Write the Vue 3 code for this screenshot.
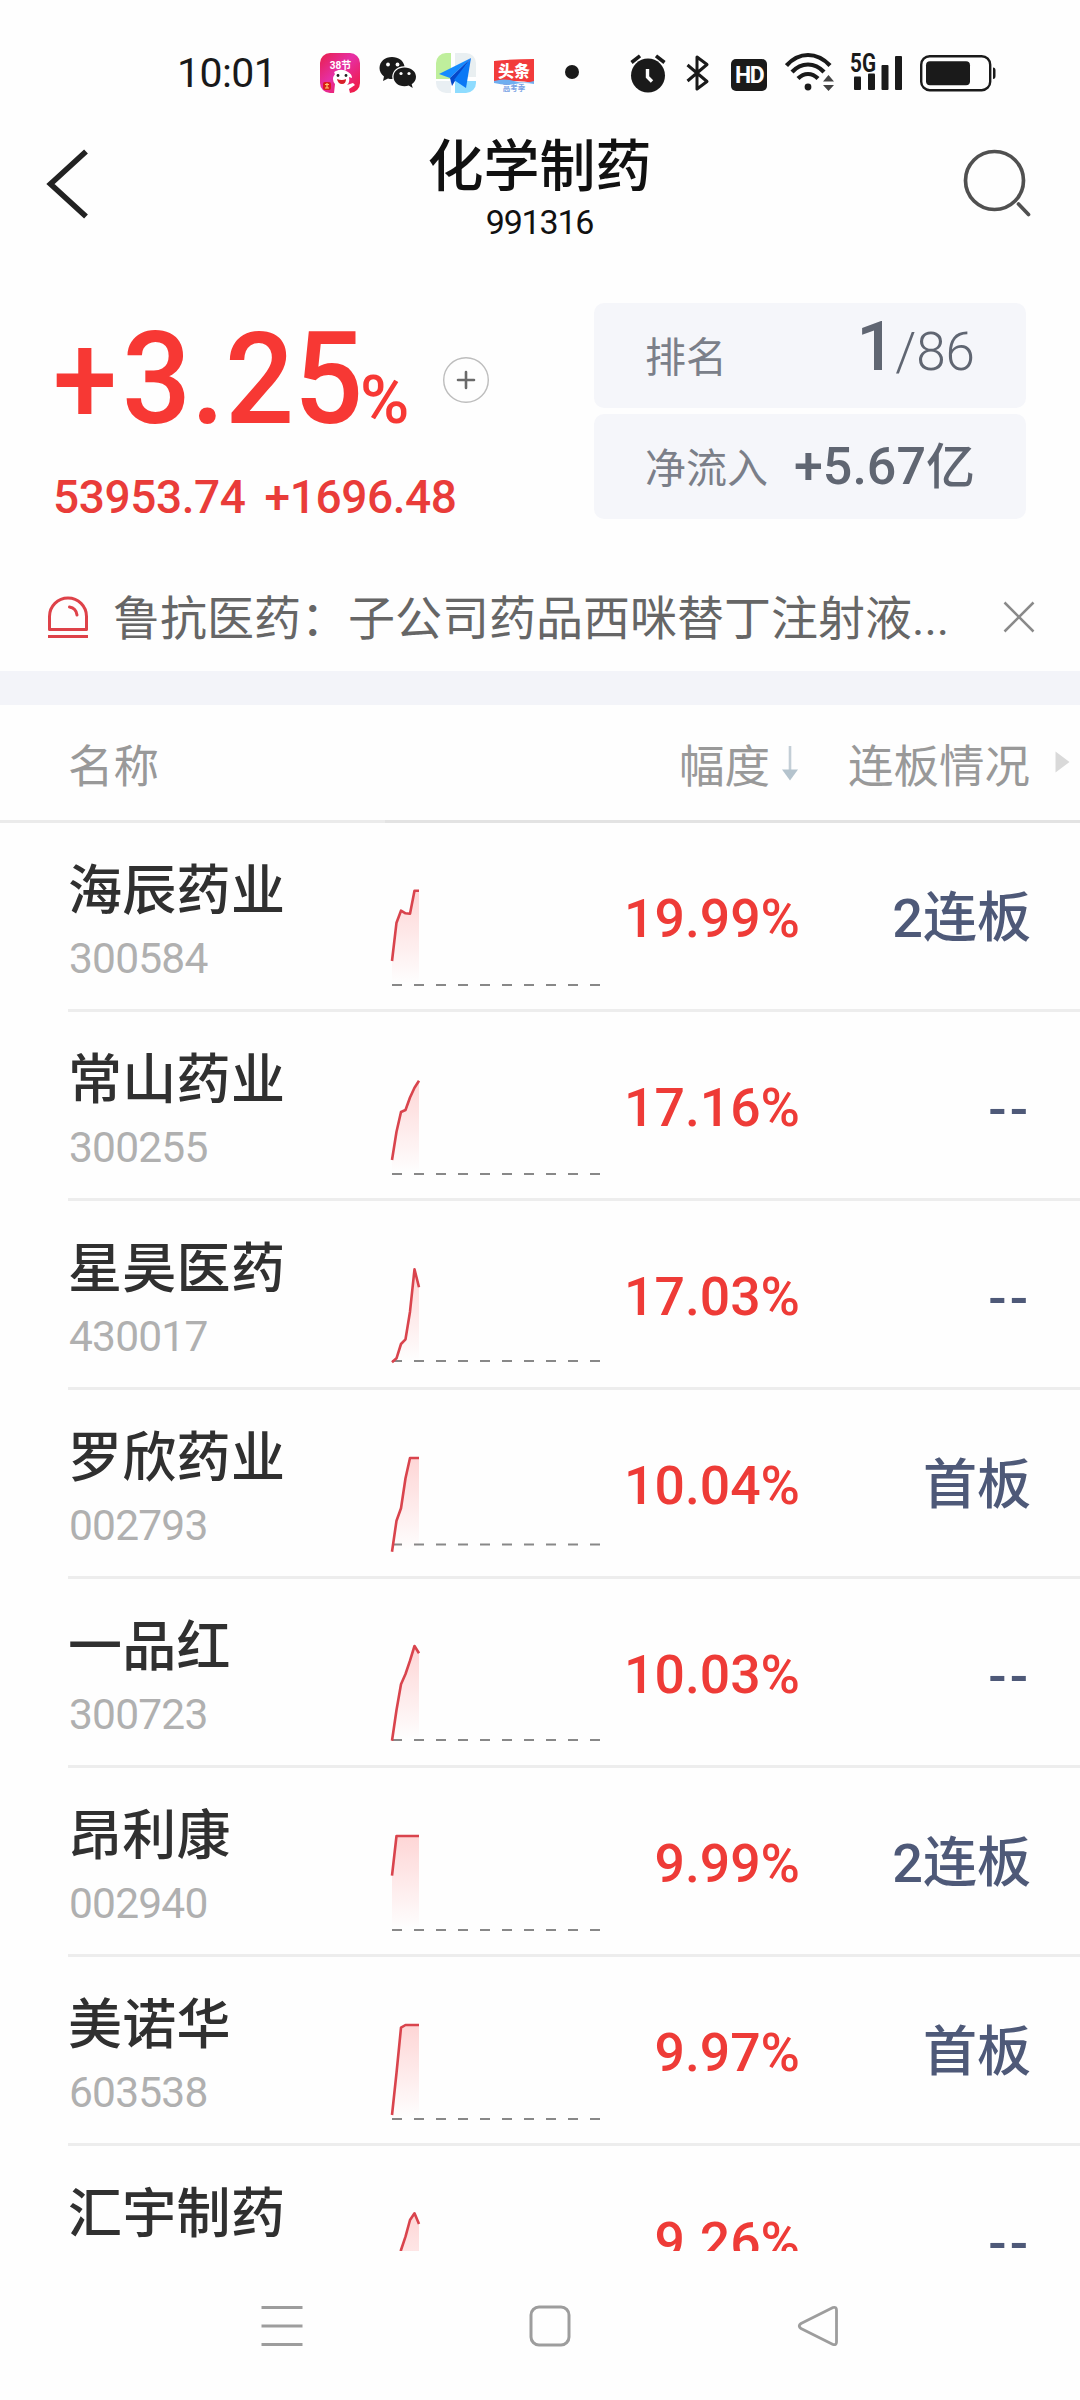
<script setup>
const STEP = 4.5

const stocks = [
  { name: '海辰药业', code: '300584', change: '19.99%', streak: '2连板', base: 162, points: [138, 99.7, 87.7, 90.3, 90.7, 67.7, 67.7] },
  { name: '常山药业', code: '300255', change: '17.16%', streak: '--', base: 162, points: [148, 119.7, 100, 98, 85.5, 75.7, 68.7] },
  { name: '星昊医药', code: '430017', change: '17.03%', streak: '--', base: 160, points: [161.3, 157.3, 143, 138.3, 110.7, 68.3, 86.3] },
  { name: '罗欣药业', code: '002793', change: '10.04%', streak: '首板', base: 154.6, points: [161.7, 130.7, 118.3, 88.3, 68, 68, 68] },
  { name: '一品红', code: '300723', change: '10.03%', streak: '--', base: 161, points: [161.7, 131, 105.3, 95, 81.7, 67, 74.3] },
  { name: '昂利康', code: '002940', change: '9.99%', streak: '2连板', base: 162, points: [107.7, 68, 68, 68, 68, 68, 68] },
  { name: '美诺华', code: '603538', change: '9.97%', streak: '首板', base: 162, points: [158, 116, 70.7, 68, 68, 68, 68] },
  { name: '汇宇制药', code: '688553', change: '9.26%', streak: '--', base: 162, points: [161, 130, 104, 90.7, 74, 67.3, 78] }
]

const line = (points) => points.map((y, i) => `${i * STEP},${y}`).join(' ')
const area = (points) => `0,162 ${line(points)} ${(points.length - 1) * STEP},162`
</script>

<template>
  <div class="screen">
    <div class="status">
      <span class="clock">10:01</span>
      <svg class="app-jd" width="40" height="40" viewBox="0 0 40 40">
        <defs>
          <linearGradient id="jd" x1="0" y1="0" x2="1" y2="1">
            <stop offset="0" stop-color="#e8204a" />
            <stop offset=".45" stop-color="#e62fa6" />
            <stop offset="1" stop-color="#f01838" />
          </linearGradient>
        </defs>
        <rect width="40" height="40" rx="10" fill="url(#jd)" />
        <text x="20.5" y="15.5" text-anchor="middle" class="jd-text">38节</text>
        <path d="M14 40l1-9q-4-5 0-10q-2-2 1-3q6-3 12 1q4 2 4 6l-3-1q1 6-2 8l6-2 2 2-6 4 1 4z" fill="#fff" />
        <circle cx="18" cy="22.5" r="1.4" fill="#222" />
        <circle cx="26" cy="22.5" r="1.4" fill="#222" />
        <path d="M17 26q5 2 9 0q0 5-4 5t-5-5z" fill="#d8202a" />
        <rect x="3" y="29" width="8" height="8" rx="2" fill="#d91c1c" />
        <path d="M5 31.5h4M7 30v5M5 35h4" stroke="#ffc76b" stroke-width="1.2" />
      </svg>
      <svg class="app-wechat" width="38" height="34" viewBox="0 0 38 34">
        <path d="M13 1C6 1 .5 5.600 .5 12c0 3.600 1.800 6.500 4.500 8.500L4 25l5-2.500c1.500.5 3 .7 4.500.6C12 16 18 10 25.500 10.300 24.500 4.500 19.500 1 13 1z" fill="#1a1a1a" />
        <path d="M25.500 11.500c-6.500 0-11 4-11 9.300s4.500 9.500 11 9.500c1.500 0 3-.3 4.200-.7l4 2.400-1-3.700c2.700-1.800 4.300-4.500 4.300-7.500 0-5.300-5-9.300-11.500-9.300z" fill="#1a1a1a" />
        <g fill="#fefefe"><circle cx="9" cy="8.500" r="1.900" /><circle cx="18.500" cy="8.500" r="1.900" /><circle cx="22" cy="17.500" r="1.600" /><circle cx="30" cy="17.500" r="1.600" /></g>
      </svg>
      <svg class="app-map" width="40" height="40" viewBox="0 0 40 40">
        <defs><clipPath id="map"><rect width="40" height="40" rx="10" /></clipPath></defs>
        <g clip-path="url(#map)">
          <rect width="40" height="40" fill="#fff" />
          <rect width="15" height="26" fill="#bfef9c" />
          <rect x="19" width="21" height="24" fill="#e9eff1" />
          <rect y="28" width="15" height="12" fill="#e9eff3" />
          <rect x="19" y="28" width="21" height="12" fill="#8edcff" />
        </g>
        <path d="M35 5L3 21l11 4z" fill="#168bff" />
        <path d="M35 5L14 25l2 8 3-5z" fill="#0648c9" />
        <path d="M35 5L18 27l12 8z" fill="#0a78f5" />
      </svg>
      <svg class="app-toutiao" width="40" height="34" viewBox="0 0 40 34">
        <path d="M0 2Q20 0 40 0V24Q20 20 0 24z" fill="#f23b3b" />
        <path d="M0 22q10-3 20 0t20 0v3q-10-2-19 0t-21-1z" fill="#6faef0" />
        <text x="20" y="18" text-anchor="middle" class="tt-text">头条</text>
        <text x="20" y="32" text-anchor="middle" class="tt-sub">高考季</text>
      </svg>
      <i class="dot"></i>
      <svg class="ic-alarm" width="36" height="39" viewBox="0 0 36 39">
        <circle cx="18" cy="21.500" r="17" fill="#1a1a1a" />
        <path d="M1.500 8.500L10 1.800M34.500 8.500L26 1.800" stroke="#1a1a1a" stroke-width="3.600" />
        <path d="M17.500 15v8l4.500 4.500" fill="none" stroke="#fefefe" stroke-width="3.400" />
      </svg>
      <svg class="ic-bt" width="24" height="38" viewBox="0 0 24 38">
        <path d="M1.500 11L21 27.500L11 35V3L21 10.500L1.500 27" fill="none" stroke="#1a1a1a" stroke-width="3" stroke-linejoin="round" />
      </svg>
      <span class="ic-hd">HD</span>
      <svg class="ic-wifi" width="50" height="39" viewBox="0 0 50 39">
        <g fill="none" stroke="#1a1a1a" stroke-width="4.200">
          <path d="M1.500 13.500Q11 3 23 3T45 13.500" />
          <path d="M7 20Q14 12.500 23 12.500T39 20" />
          <path d="M13 26.500Q17.500 22 23 22T33 26.500" />
        </g>
        <circle cx="23" cy="35" r="3.400" fill="#1a1a1a" />
        <path d="M38 29.500L43.500 23l5.500 6.500zM38 33h11l-5.500 6z" fill="#444" />
      </svg>
      <svg class="ic-signal" width="54" height="38" viewBox="0 0 54 38">
        <text x="0" y="18.500" class="g5" textLength="26" lengthAdjust="spacingAndGlyphs">5G</text>
        <g fill="#1a1a1a">
          <rect x="4" y="23.500" width="7" height="13.500" rx="1" /><rect x="18" y="20.500" width="7" height="16.500" rx="1" />
          <rect x="31.500" y="12" width="7" height="25" rx="1" /><rect x="45" y="3" width="7" height="34" rx="1" />
        </g>
      </svg>
      <svg class="ic-battery" width="77" height="37" viewBox="0 0 77 37">
        <rect x="1.200" y="1.200" width="69" height="34" rx="8.500" fill="none" stroke="#1a1a1a" stroke-width="2.400" />
        <rect x="6" y="6.300" width="44" height="24" rx="4" fill="#1a1a1a" />
        <path d="M73 12.500q2.500 0 2.500 3v5.500q0 3-2.500 3z" fill="#1a1a1a" />
      </svg>
    </div>

    <header class="head">
      <svg class="back" width="44" height="70" viewBox="0 0 44 70">
        <path d="M40 2.500L4.500 35L40 67.500" fill="none" stroke="#222" stroke-width="5.600" />
      </svg>
      <div class="titles">
        <h1>化学制药</h1>
        <span class="index-code">991316</span>
      </div>
      <svg class="search" width="70" height="70" viewBox="0 0 70 70">
        <circle cx="31.500" cy="31.500" r="29" fill="none" stroke="#505050" stroke-width="3.700" />
        <path d="M55.500 55l10 10.500" stroke="#505050" stroke-width="3.700" stroke-linecap="round" />
      </svg>
    </header>

    <section class="hero">
      <div class="quote">
        <div class="pct-row">
          <div class="pct"><span class="plus">+</span><span class="num">3.25</span><span class="unit">%</span></div>
          <svg class="add" width="46" height="46" viewBox="0 0 46 46">
            <circle cx="23" cy="23" r="22.300" fill="none" stroke="#bdbdbd" stroke-width="1.400" />
            <path d="M15 23h16M23 15v16" stroke="#6a6a6a" stroke-width="2.600" stroke-linecap="round" />
          </svg>
        </div>
        <div class="points"><span>53953.74</span><span>+1696.48</span></div>
      </div>
      <div class="stats">
        <div class="stat">
          <span class="label">排名</span>
          <span class="value"><b class="rank">1</b><span class="total">/86</span></span>
        </div>
        <div class="stat">
          <span class="label">净流入</span>
          <span class="value flow">+5.67<span class="yi">亿</span></span>
        </div>
      </div>
    </section>

    <div class="news">
      <svg class="siren" width="42" height="44" viewBox="0 0 42 44">
        <path d="M2.500 33.500V20.500a18.500 18.500 0 0 1 37 0V33.500z" fill="none" stroke="#de4249" stroke-width="3" stroke-linejoin="round" />
        <path d="M22.500 11q6.500 1 7.500 8" fill="none" stroke="#de4249" stroke-width="3" stroke-linecap="round" />
        <path d="M1 40.500h40" stroke="#de4249" stroke-width="3" />
      </svg>
      <span class="headline">鲁抗医药：子公司药品西咪替丁注射液<span class="dots">...</span></span>
      <svg class="close" width="32" height="32" viewBox="0 0 32 32">
        <path d="M1.500 1.500l29 29M30.500 1.500l-29 29" stroke="#8a8a8a" stroke-width="2.500" />
      </svg>
    </div>

    <div class="band"></div>

    <div class="thead">
      <span class="th-name">名称</span>
      <span class="th-change">幅度</span>
      <svg class="sort" width="16" height="36" viewBox="0 0 16 36">
        <path d="M8 1v26" stroke="#c3ced6" stroke-width="2.600" />
        <path d="M0 24.500h16L8 35.500z" fill="#b4c3cd" />
      </svg>
      <span class="th-streak">连板情况</span>
      <svg class="more" width="15" height="22" viewBox="0 0 15 22"><path d="M.5 .5L14.500 11L.5 21.500z" fill="#d9d9d9" /></svg>
    </div>
    <div class="thead-line"><i></i></div>

    <main class="list">
      <div v-for="s in stocks" :key="s.code" class="row">
        <div class="who">
          <div class="name">{{ s.name }}</div>
          <div class="code">{{ s.code }}</div>
        </div>
        <svg class="chart" width="212" height="186" viewBox="-2 0 212 186">
          <defs>
            <linearGradient id="fade" gradientUnits="userSpaceOnUse" x1="0" y1="68" x2="0" y2="160">
              <stop offset="0" stop-color="#f33" stop-opacity=".2" />
              <stop offset="1" stop-color="#f33" stop-opacity="0" />
            </linearGradient>
          </defs>
          <path :d="`M0 ${s.base}H208`" stroke="#888" stroke-width="2" stroke-dasharray="10 12" />
          <polygon :points="area(s.points)" fill="url(#fade)" />
          <polyline :points="line(s.points)" fill="none" stroke="#d9444d" stroke-width="2.600" stroke-linejoin="round" />
        </svg>
        <div class="change">{{ s.change }}</div>
        <div class="streak" :class="{ none: s.streak === '--' }">{{ s.streak }}</div>
      </div>
    </main>

    <nav class="nav">
      <svg width="42" height="42" viewBox="0 0 42 42"><path d="M.5 2.500h41M.5 21h41M.5 39.500h41" stroke="#9d9d9d" stroke-width="3.200" /></svg>
      <svg width="42" height="42" viewBox="0 0 42 42"><rect x="2" y="2" width="38" height="38" rx="8" fill="none" stroke="#9d9d9d" stroke-width="3" /></svg>
      <svg width="42" height="42" viewBox="0 0 42 42"><path d="M36 2.500L4 18.500Q.5 21 4 23.500L36 39.500Q39.500 40.500 39.500 37V5Q39.500 1.500 36 2.500z" fill="none" stroke="#9d9d9d" stroke-width="2.800" stroke-linejoin="round" /></svg>
    </nav>
  </div>
</template>

<style>
body {
  background: #fefefe;
}
</style>

<style scoped>
.screen {
  width: 1080px;
  height: 2400px;
  display: flex;
  flex-direction: column;
  overflow: hidden;
  background: #fefefe;
  font-family: Roboto, "Noto Sans CJK SC", sans-serif;
}
.screen svg {
  display: block;
  flex: none;
}

.status {
  height: 120px;
  display: flex;
  align-items: flex-start;
  flex: none;
}
.clock {
  margin: 48px 0 0 177px;
  width: 143px;
  font-size: 41px;
  line-height: 50px;
  letter-spacing: -0.6px;
  color: #1a1a1a;
}
.app-jd { margin-top: 53px; }
.jd-text { font: 700 10px Roboto, "Noto Sans CJK SC", sans-serif; fill: #fff; }
.app-wechat { margin: 56px 0 0 19px; }
.app-map { margin: 53px 0 0 19px; }
.app-toutiao { margin: 59px 0 0 18px; }
.tt-text { font: 900 16px "Noto Sans CJK SC", sans-serif; fill: #fff; }
.tt-sub { font: 700 7.5px "Noto Sans CJK SC", sans-serif; fill: #7aa2e4; }
.dot {
  width: 14px;
  height: 14px;
  margin: 65px 0 0 31px;
  border-radius: 50%;
  background: #1a1a1a;
}
.ic-alarm { margin: 54px 0 0 51px; }
.ic-bt { margin: 54px 0 0 20px; }
.ic-hd {
  width: 36px;
  height: 32px;
  margin: 59px 0 0 21px;
  border-radius: 5px;
  background: #1a1a1a;
  color: #fefefe;
  font-size: 23px;
  font-weight: 700;
  line-height: 33px;
  letter-spacing: -1.5px;
  text-align: center;
}
.ic-wifi { margin: 52px 0 0 18px; }
.ic-signal { margin: 52.5px 0 0 15px; }
.g5 { font: 700 25px Roboto, sans-serif; fill: #1a1a1a; }
.ic-battery { margin: 55px 0 0 16px; }

.head {
  height: 130px;
  display: flex;
  align-items: flex-start;
  justify-content: space-between;
  flex: none;
  padding: 0 47px 0 46px;
}
.back { margin-top: 29px; margin-right: 26px; }
.search { margin-top: 29px; }
.titles {
  display: flex;
  flex-direction: column;
  align-items: center;
  padding-top: 12px;
  color: #111;
}
h1 {
  margin: 0;
  font: 500 56px/60px "Noto Sans CJK SC", sans-serif;
}
.index-code {
  margin-top: 13px;
  font-size: 34px;
  line-height: 34px;
  letter-spacing: -1.2px;
}

.hero {
  height: 320px;
  display: flex;
  justify-content: space-between;
  flex: none;
  padding: 0 54px 0 53px;
}
.quote {
  padding-top: 69px;
  color: #f73834;
}
.pct-row {
  display: flex;
  align-items: flex-start;
}
.pct {
  width: 390px;
  font-size: 128px;
  font-weight: 500;
  line-height: 120px;
  white-space: nowrap;
}
.pct span { display: inline-block; transform-origin: 0 50%; }
.plus { width: 69px; transform: scaleX(0.9); }
.num { width: 238px; transform: scaleX(0.95); }
.unit {
  font-size: 67px;
  line-height: 0;
}
.add { margin-top: 38px; }
.points {
  display: flex;
  gap: 19px;
  margin-top: 33px;
  font-size: 46px;
  font-weight: 500;
  line-height: 50px;
  letter-spacing: -0.4px;
  color: #e93c39;
}

.stats {
  width: 432px;
  display: flex;
  flex-direction: column;
  gap: 6px;
  padding-top: 53px;
}
.stat {
  height: 105px;
  display: flex;
  align-items: center;
  justify-content: space-between;
  box-sizing: border-box;
  padding: 0 51px;
  border-radius: 10px;
  background: #f5f6fa;
  color: #606672;
}
.label {
  font: 400 41px/50px "Noto Sans CJK SC", sans-serif;
  margin-top: -3px;
  color: #7b7f89;
}
.value { line-height: 70px; }
.rank {
  font-size: 68px;
  font-weight: 500;
}
.total {
  font-size: 53px;
  font-weight: 300;
  line-height: 0;
}
.flow {
  font-size: 52px;
  font-weight: 500;
}
.yi { font-size: 49px; line-height: 0; }

.news {
  height: 101px;
  display: flex;
  align-items: flex-start;
  flex: none;
  padding-left: 47px;
}
.siren { margin-top: 26px; }
.headline {
  width: 850px;
  margin: 15px 0 0 24px;
  font: 400 47px/60px "Noto Sans CJK SC", sans-serif;
  color: #666;
  white-space: nowrap;
}
.dots {
  font-family: Roboto, sans-serif;
  line-height: 0;
}
.close { margin: 31px 0 0 40px; }

.band {
  height: 34px;
  flex: none;
  background: #f3f4f9;
}

.thead {
  height: 115px;
  display: flex;
  align-items: center;
  flex: none;
  font: 400 45.5px/60px "Noto Sans CJK SC", sans-serif;
  color: #999;
}
.th-name { width: 611px; margin-left: 68px; }
.th-change { width: 103px; }
.th-streak { width: 207px; margin-left: 50px; }
.more { margin: 0 0 1px; }
.thead-line {
  height: 3px;
  flex: none;
  background: #e3e3e3;
}
.thead-line i {
  display: block;
  width: 385px;
  height: 3px;
  background: #ebebeb;
}

.list {
  height: 1428px;
  flex: none;
  overflow: hidden;
}
.row {
  height: 186px;
  display: flex;
  margin-left: 68px;
  border-bottom: 3px solid #ededed;
}
.who {
  width: 322px;
  padding-top: 36px;
}
.name {
  font: 500 54px/55px "Noto Sans CJK SC", sans-serif;
  letter-spacing: 0.3px;
  color: #303030;
}
.code {
  margin: 23px 0 0 1px;
  font-size: 42.5px;
  line-height: 44px;
  letter-spacing: -0.8px;
  color: #b0b0b0;
}
.change {
  width: 198px;
  padding-top: 66px;
  font-size: 53.5px;
  font-weight: 500;
  line-height: 60px;
  text-align: right;
  color: #ee3b37;
}
.streak {
  width: 231px;
  padding-top: 66px;
  font-size: 54px;
  font-weight: 500;
  line-height: 60px;
  text-align: right;
  color: #4e5978;
}
.none {
  padding-top: 68px;
  letter-spacing: 3px;
}

.nav {
  height: 149px;
  display: flex;
  align-items: flex-start;
  gap: 226px;
  flex: none;
  box-sizing: border-box;
  padding: 54px 0 0 261px;
}
</style>
